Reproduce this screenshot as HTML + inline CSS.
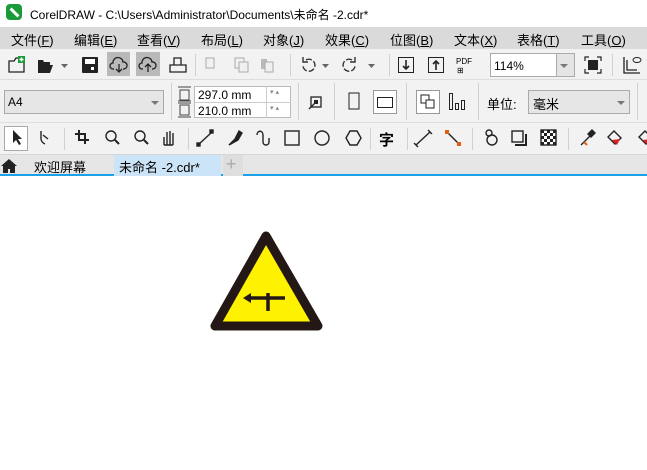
<!DOCTYPE html>
<html><head><meta charset="utf-8"><style>
*{margin:0;padding:0;box-sizing:border-box}
body{width:647px;height:470px;overflow:hidden;background:#fff;font-family:"Liberation Sans","Noto Sans CJK SC",sans-serif;font-size:12px;color:#000;position:relative}
.abs{position:absolute}
#title{top:0;left:0;width:647px;height:27px;background:#fff}
#menu{top:27px;left:0;width:647px;height:22px;background:#dadada}
#menu span{position:absolute;top:3px;font-size:13px}
#tb1{top:49px;left:0;width:647px;height:31px;background:#f2f2f2;border-bottom:1px solid #ddd}
#tb2{top:80px;left:0;width:647px;height:43px;background:#f2f2f2;border-bottom:1px solid #ddd}
#tb3{top:123px;left:0;width:647px;height:32px;background:#f2f2f2;border-bottom:1px solid #d6d6d6}
#tabs{top:155px;left:0;width:647px;height:21px;background:#e6e6e6;border-bottom:2px solid #1aa1e8}
.sep{position:absolute;width:1px;background:#d0d0d0}
.box{position:absolute;border:1px solid #aaa;background:#fff}
svg{position:absolute;overflow:visible}
</style></head><body>
<div id="title" class="abs">
<div class="abs" style="left:6px;top:4px;width:16px;height:16px;border-radius:4px;background:#1a9b3a"><div class="abs" style="left:3px;top:7px;width:11px;height:3px;background:#fff;transform:rotate(45deg)"></div></div>
<span class="abs" style="left:30px;top:6px;font-size:12px">CorelDRAW - C:\Users\Administrator\Documents\未命名 -2.cdr*</span>
</div>
<div id="menu" class="abs">
<span style="left:11px">文件(<u>F</u>)</span><span style="left:74px">编辑(<u>E</u>)</span><span style="left:137px">查看(<u>V</u>)</span><span style="left:201px">布局(<u>L</u>)</span><span style="left:263px">对象(<u>J</u>)</span><span style="left:325px">效果(<u>C</u>)</span><span style="left:390px">位图(<u>B</u>)</span><span style="left:454px">文本(<u>X</u>)</span><span style="left:517px">表格(<u>T</u>)</span><span style="left:581px">工具(<u>O</u>)</span>
</div>
<div id="tb1" class="abs">
<svg style="left:8px;top:7px" width="18" height="18"><path d="M1 5h5l2-3h8v14H1z" fill="none" stroke="#222" stroke-width="1.3"/><rect x="10" y="0" width="7" height="7" fill="#1a9b3a"/><path d="M13.5 1.5v4M11.5 3.5h4" stroke="#fff" stroke-width="1.4"/></svg>
<svg style="left:37px;top:9px" width="30" height="16"><path d="M1 2h5l1 2h6v3H4l-3 8z M1 15h12l3-8H4" fill="#222"/><path d="M24 6h7l-3.5 4z" fill="#666"/></svg>
<svg style="left:82px;top:8px" width="16" height="16"><rect x="0" y="0" width="16" height="16" rx="1" fill="#222"/><rect x="3" y="2" width="10" height="5" fill="#fff"/><rect x="9" y="10" width="3" height="3" fill="#fff"/></svg>
<div class="abs" style="left:107px;top:3px;width:23px;height:24px;background:#b9b9b9"></div>
<div class="abs" style="left:136px;top:3px;width:24px;height:24px;background:#b9b9b9"></div>
<svg style="left:110px;top:8px" width="18" height="16"><path d="M4 12H3a3 3 0 0 1 0-6 5 5 0 0 1 10-1 3.5 3.5 0 0 1 1 7h-1M9 7v8M6 12l3 3 3-3" fill="none" stroke="#222" stroke-width="1.3"/></svg>
<svg style="left:139px;top:8px" width="18" height="16"><path d="M4 12H3a3 3 0 0 1 0-6 5 5 0 0 1 10-1 3.5 3.5 0 0 1 1 7h-1M9 15V7M6 10l3-3 3 3" fill="none" stroke="#222" stroke-width="1.3"/></svg>
<svg style="left:169px;top:8px" width="18" height="16"><path d="M5 8V1h7v7M1 8h16v7H1z" fill="none" stroke="#222" stroke-width="1.3"/></svg>
<div class="sep" style="left:195px;top:5px;height:22px"></div>
<svg style="left:205px;top:8px" width="70" height="16" opacity=".45"><rect x="1" y="1" width="8" height="10" fill="none" stroke="#555"/><rect x="30" y="1" width="9" height="10" fill="none" stroke="#555"/><rect x="34" y="5" width="9" height="10" fill="#eee" stroke="#555"/><rect x="56" y="2" width="6" height="10" fill="#777"/><rect x="60" y="5" width="8" height="10" fill="#eee" stroke="#555"/></svg>
<div class="sep" style="left:290px;top:5px;height:22px"></div>
<svg style="left:300px;top:7px" width="80" height="18"><path d="M6 4a6 6 0 1 1-3 6" fill="none" stroke="#333" stroke-width="1.4" stroke-dasharray="6 2"/><path d="M3 1v5h5" fill="none" stroke="#333" stroke-width="1.4"/><path d="M22 8h7l-3.5 4z" fill="#666"/><path d="M52 4a6 6 0 1 0 3 6" fill="none" stroke="#333" stroke-width="1.4" stroke-dasharray="6 2"/><path d="M55 1v5h-5" fill="none" stroke="#333" stroke-width="1.4"/><path d="M68 8h7l-3.5 4z" fill="#666"/></svg>
<div class="sep" style="left:389px;top:5px;height:22px"></div>
<svg style="left:398px;top:8px" width="16" height="16"><rect x="0.5" y="0.5" width="15" height="15" fill="none" stroke="#222"/><path d="M8 3v9M5 9l3 3 3-3" fill="none" stroke="#222" stroke-width="1.6"/></svg>
<svg style="left:428px;top:8px" width="16" height="16"><rect x="0.5" y="0.5" width="15" height="15" fill="none" stroke="#222"/><path d="M8 13V4M5 7l3-3 3 3" fill="none" stroke="#222" stroke-width="1.6"/></svg>
<span class="abs" style="left:456px;top:8px;font-size:8px">PDF</span><span class="abs" style="left:457px;top:17px;font-size:8px">⊞</span>
<div class="box" style="left:490px;top:4px;width:85px;height:24px"><span class="abs" style="left:3px;top:5px">114%</span><div class="abs" style="right:0;top:0;width:18px;height:22px;background:#e4e4e4;border-left:1px solid #aaa"></div><svg style="left:69px;top:10px" width="8" height="4"><path d="M0 0h8L4 4z" fill="#777"/></svg></div>
<svg style="left:585px;top:8px" width="16" height="16"><rect x="3" y="3" width="10" height="10" fill="#222"/><path d="M0 4V0h4M12 0h4v4M16 12v4h-4M4 16H0v-4" fill="none" stroke="#222" stroke-width="1.2"/></svg>
<div class="sep" style="left:612px;top:5px;height:22px"></div>
<svg style="left:623px;top:7px" width="20" height="18"><path d="M1 1v16h16M4 4v10h10" fill="none" stroke="#222" stroke-width="1.3"/><ellipse cx="14" cy="4" rx="4" ry="2.5" fill="none" stroke="#222"/></svg>
</div>
<div id="tb2" class="abs">
<div class="abs" style="left:4px;top:10px;width:160px;height:24px;background:#e6e6e6;border:1px solid #aaa"><span class="abs" style="left:3px;top:4px">A4</span><svg style="left:146px;top:10px" width="8" height="4"><path d="M0 0h8L4 4z" fill="#777"/></svg></div>
<div class="sep" style="left:171px;top:3px;height:37px"></div>
<svg style="left:178px;top:6px" width="14" height="32"><path d="M0 1h13M0 15h13M2 4h9v10H2zM0 17h13M0 31h13" fill="none" stroke="#444"/><rect x="2" y="19" width="9" height="10" fill="none" stroke="#444"/></svg>
<div class="box" style="left:194px;top:6px;width:97px;height:32px;border-color:#bbb"></div>
<div class="abs" style="left:194px;top:22px;width:97px;height:1px;background:#ccc"></div>
<div class="abs" style="left:266px;top:6px;width:1px;height:32px;background:#ccc"></div>
<span class="abs" style="left:198px;top:8px;font-size:12px">297.0 mm</span>
<span class="abs" style="left:198px;top:24px;font-size:12px">210.0 mm</span>
<span class="abs" style="left:270px;top:8px;font-size:7px;color:#888">▾ ▴</span>
<span class="abs" style="left:270px;top:24px;font-size:7px;color:#888">▾ ▴</span>
<div class="sep" style="left:298px;top:3px;height:37px"></div>
<svg style="left:308px;top:14px" width="16" height="16"><rect x="3" y="3" width="10" height="10" fill="none" stroke="#222" stroke-width="1.3"/><path d="M1 15L8 8" stroke="#222" stroke-width="1.3"/><rect x="6" y="6" width="4" height="4" fill="#222"/></svg>
<div class="sep" style="left:334px;top:3px;height:37px"></div>
<svg style="left:348px;top:12px" width="12" height="20"><rect x="1" y="1" width="10" height="16" fill="none" stroke="#222"/></svg>
<div class="box" style="left:373px;top:10px;width:24px;height:24px;border-color:#999"></div>
<svg style="left:377px;top:17px" width="16" height="12"><rect x="0.5" y="0.5" width="15" height="10" fill="none" stroke="#222"/></svg>
<div class="sep" style="left:406px;top:3px;height:37px"></div>
<div class="box" style="left:416px;top:10px;width:24px;height:24px;border-color:#999"></div>
<svg style="left:420px;top:14px" width="16" height="16"><rect x="1" y="1" width="8" height="8" fill="none" stroke="#222"/><rect x="6" y="6" width="8" height="8" fill="#fff" stroke="#222"/></svg>
<svg style="left:449px;top:13px" width="16" height="18"><rect x="0.5" y="0.5" width="3" height="16" fill="none" stroke="#222"/><rect x="6.5" y="10.5" width="3" height="6" fill="none" stroke="#222"/><rect x="12.5" y="7.5" width="3" height="9" fill="none" stroke="#222"/></svg>
<div class="sep" style="left:478px;top:3px;height:37px"></div>
<span class="abs" style="left:487px;top:14px;font-size:13px">单位:</span>
<div class="abs" style="left:528px;top:10px;width:102px;height:24px;background:#e6e6e6;border:1px solid #aaa"><span class="abs" style="left:4px;top:3px;font-size:13px">毫米</span><svg style="left:88px;top:10px" width="8" height="4"><path d="M0 0h8L4 4z" fill="#777"/></svg></div>
<div class="sep" style="left:637px;top:3px;height:37px"></div>
</div>
<div id="tb3" class="abs">
<div class="box" style="left:4px;top:3px;width:24px;height:25px;border-color:#aaa"></div>
<svg style="left:0;top:0" width="647" height="32" fill="none" stroke="#222" stroke-width="1.4">
<path d="M13 7v13l3-3 3 5 2-1-3-5h4z" fill="#222" stroke="none"/>
<path d="M41 8v8c0 2 2 4 4 5M43 12l5 4" />
<path d="M79 7v10h10M75 11h10v10" stroke-width="2"/>
<circle cx="111" cy="13" r="5"/><path d="M115 17l4 4" stroke-width="2"/>
<circle cx="140" cy="13" r="5"/><path d="M144 17l4 4" stroke-width="2"/>
<path d="M164 22v-8m3 8V9m3 13V8m3 14V10m-9 12h9" />
<path d="M198 22l14-13"/><rect x="197" y="20" width="3" height="3" fill="#222"/><rect x="210" y="7" width="3" height="3" fill="#222"/>
<path d="M229 22l6-6 4-8 3 2-4 7z" fill="#222"/>
<path d="M257 12c0-5 6-5 6 0v7c0 4 6 4 6 0v-4"/>
<rect x="285" y="8" width="14" height="14"/>
<circle cx="322" cy="15" r="7"/>
<path d="M346 15l4-7h7l4 7-4 7h-7z"/>
<path d="M416 22l14-13M414 20l4 4M428 7l4 4"/>
<path d="M447 9l12 12" stroke="#222"/><rect x="445" y="7" width="4" height="4" fill="#e06010" stroke="none"/><rect x="457" y="19" width="4" height="4" fill="#e06010" stroke="none"/>
<circle cx="489" cy="10" r="3"/><circle cx="492" cy="17" r="5"/>
<rect x="512" y="8" width="11" height="11"/><path d="M515 22h11V11" stroke-width="2"/>
<rect x="541" y="7" width="15" height="15" fill="#fff"/>
<path d="M581 22l9-9M588 11l4-4 3 3-4 4z" fill="#222"/>
<path d="M608 14l6-6 7 7-6 6z"/>
<path d="M639 14l6-6 7 7-6 6z"/>
</svg>
<svg style="left:541px;top:7px" width="16" height="16"><g fill="#222"><rect x="0" y="0" width="3" height="3"/><rect x="6" y="0" width="3" height="3"/><rect x="12" y="0" width="3" height="3"/><rect x="3" y="3" width="3" height="3"/><rect x="9" y="3" width="3" height="3"/><rect x="0" y="6" width="3" height="3"/><rect x="6" y="6" width="3" height="3"/><rect x="12" y="6" width="3" height="3"/><rect x="3" y="9" width="3" height="3"/><rect x="9" y="9" width="3" height="3"/><rect x="0" y="12" width="3" height="3"/><rect x="6" y="12" width="3" height="3"/><rect x="12" y="12" width="3" height="3"/></g></svg>
<svg style="left:0;top:0" width="647" height="32"><path d="M612 17l5 5 3-6z" fill="#e02020"/><path d="M643 17l5 5 3-6z" fill="#e02020"/><path d="M584 19l3 3" stroke="#e06010" stroke-width="2"/></svg>
<span class="abs" style="left:379px;top:6px;font-size:15px;font-weight:bold">字</span>
<div class="sep" style="left:64px;top:5px;height:22px"></div>
<div class="sep" style="left:188px;top:5px;height:22px"></div>
<div class="sep" style="left:370px;top:5px;height:22px"></div>
<div class="sep" style="left:407px;top:5px;height:22px"></div>
<div class="sep" style="left:472px;top:5px;height:22px"></div>
<div class="sep" style="left:568px;top:5px;height:22px"></div>
</div>
<div id="tabs" class="abs">
<svg style="left:1px;top:3px" width="16" height="15"><path d="M0 8L8 1l8 7h-2v7H9v-4H7v4H2V8z" fill="#222"/></svg>
<span class="abs" style="left:34px;top:2px;font-size:13px">欢迎屏幕</span>
<div class="abs" style="left:114px;top:0;width:107px;height:21px;background:#cce4f7"></div>
<span class="abs" style="left:119px;top:2px;font-size:13px">未命名 -2.cdr*</span>
<div class="abs" style="left:223px;top:0;width:20px;height:21px;background:#dedede"></div>
<span class="abs" style="left:226px;top:-1px;font-size:18px;color:#aaa">+</span>
</div>
<svg style="left:0;top:0" width="647" height="470">
<path d="M266 236L215 326H318Z" fill="#fff200" stroke="#231815" stroke-width="9" stroke-linejoin="round"/>
<path d="M250 298H285M268 293V311" stroke="#231815" stroke-width="3.5" fill="none"/>
<path d="M243 298l8-5v10z" fill="#231815"/>
</svg>
</body></html>
